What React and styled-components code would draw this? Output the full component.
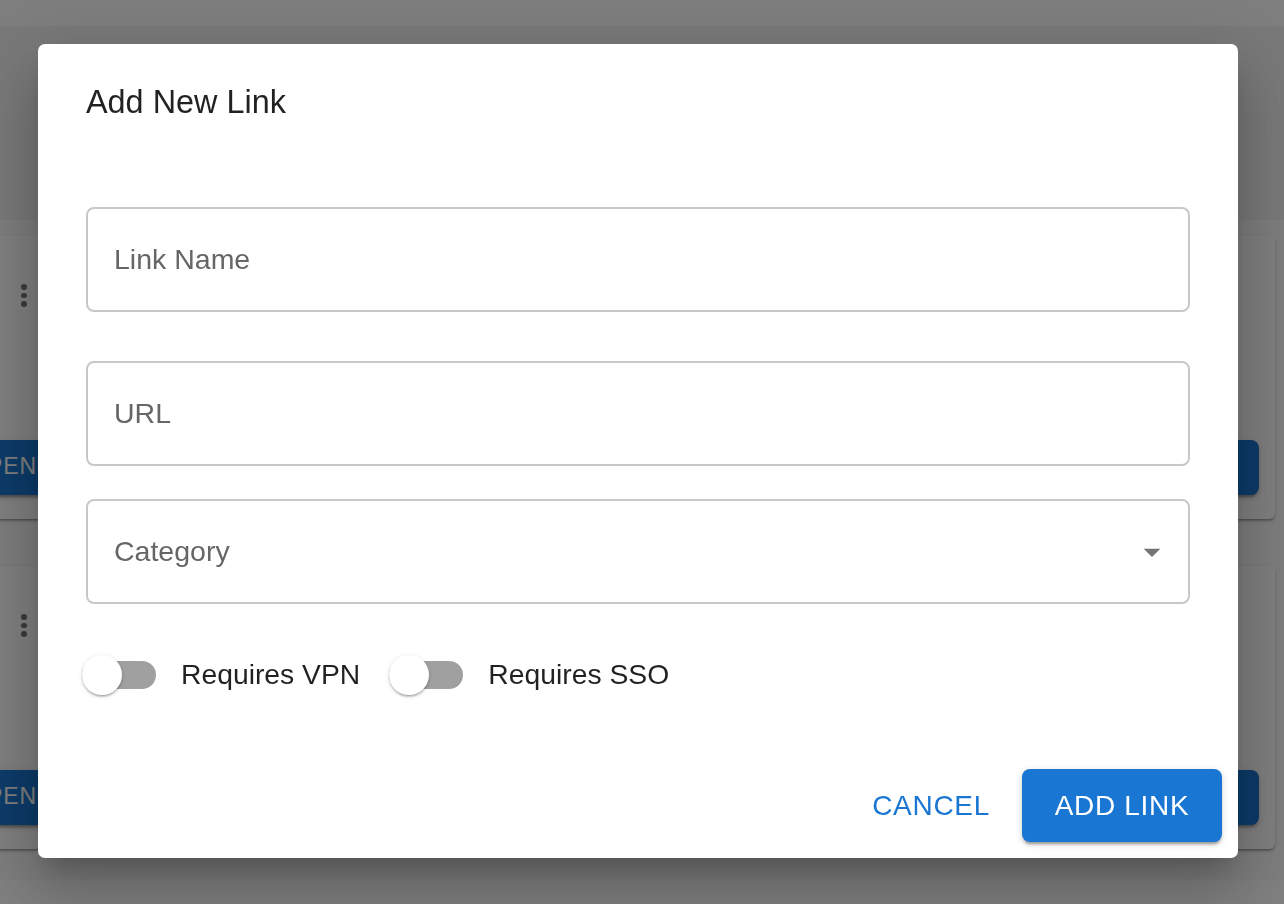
import React from 'react';
import styled, { createGlobalStyle } from 'styled-components';

const GlobalStyle = createGlobalStyle`
  html, body {
    margin: 0;
    height: 100%;
    overflow: hidden;
    background: #fbfbfb;
    font-family: "Liberation Sans", Arial, sans-serif;
  }
`;

const App = () => {
  return (
    <>
      <GlobalStyle />
      <Page>
        <TopBand />
        <HeaderBand />
        <CardArea>
          <LinkCard>
            <MoreDots>
              <i />
              <i />
              <i />
            </MoreDots>
            <CardActions>
              <OpenButton>OPEN</OpenButton>
            </CardActions>
          </LinkCard>
          <LinkCard>
            <MoreDots>
              <i />
              <i />
              <i />
            </MoreDots>
            <CardActions>
              <OpenButton>OPEN</OpenButton>
            </CardActions>
          </LinkCard>
        </CardArea>
        <BottomBand />
      </Page>
      <Backdrop />
      <DialogWrap>
        <Dialog>
          <DialogTitle>Add New Link</DialogTitle>
          <DialogBody>
            <OutlinedField>
              <Placeholder>Link Name</Placeholder>
            </OutlinedField>
            <OutlinedField>
              <Placeholder>URL</Placeholder>
            </OutlinedField>
            <OutlinedField $select>
              <Placeholder>Category</Placeholder>
              <svg width="40" height="40" viewBox="0 0 24 24" fill="#757575">
                <path d="M7 10l5 5 5-5z" />
              </svg>
            </OutlinedField>
            <SwitchRow>
              <SwitchLabel>
                <SwitchTrack>
                  <SwitchThumb />
                </SwitchTrack>
                Requires VPN
              </SwitchLabel>
              <SwitchLabel>
                <SwitchTrack>
                  <SwitchThumb />
                </SwitchTrack>
                Requires SSO
              </SwitchLabel>
            </SwitchRow>
          </DialogBody>
          <DialogActions>
            <TextButton>CANCEL</TextButton>
            <ContainedButton>ADD LINK</ContainedButton>
          </DialogActions>
        </Dialog>
      </DialogWrap>
    </>
  );
};

export default App;

const Page = styled.div`
  width: 1284px;
  height: 904px;
  display: flex;
  flex-direction: column;
  overflow: hidden;
`;

const TopBand = styled.div`
  flex: 0 0 26px;
  background: #fcfcfc;
`;

const HeaderBand = styled.div`
  flex: 0 0 194px;
  background: #f2f2f2;
`;

const CardArea = styled.div`
  flex: 0 0 660px;
  box-sizing: border-box;
  display: flex;
  flex-direction: column;
  gap: 47px;
  padding: 16px 9px 0 0;
  margin-left: -60px;
  background: #fbfbfb;
`;

const BottomBand = styled.div`
  flex: 1;
  background: #ffffff;
`;

const LinkCard = styled.div`
  flex: 0 0 283px;
  display: flex;
  flex-direction: column;
  justify-content: space-between;
  background: #fff;
  border-radius: 6px;
  box-shadow: 0 3px 2px -2px rgba(0, 0, 0, 0.2), 0 2px 2px rgba(0, 0, 0, 0.14),
    0 2px 5px rgba(0, 0, 0, 0.12);
`;

const MoreDots = styled.div`
  display: flex;
  flex-direction: column;
  gap: 3px;
  width: 6px;
  margin: 48px 0 0 81px;

  i {
    width: 6px;
    height: 5.6px;
    border-radius: 50%;
    background: #757575;
  }
`;

const CardActions = styled.div`
  display: flex;
  padding: 0 16px 24px 0;
`;

const OpenButton = styled.button`
  flex: 1;
  height: 55px;
  padding: 0 0 2px 28px;
  border: 0;
  border-radius: 8px;
  background: #1976d2;
  color: #fff;
  font: 23px "Liberation Sans", Arial, sans-serif;
  letter-spacing: 1px;
  text-align: left;
  box-shadow: 0 5px 2px -3px rgba(0, 0, 0, 0.2), 0 3px 3px rgba(0, 0, 0, 0.14),
    0 2px 8px rgba(0, 0, 0, 0.12);
`;

const Backdrop = styled.div`
  position: fixed;
  inset: 0;
  background: rgba(0, 0, 0, 0.5);
`;

const DialogWrap = styled.div`
  position: fixed;
  top: 0;
  left: 0;
  width: 1276px;
  height: 902px;
  display: flex;
  align-items: center;
  justify-content: center;
`;

const Dialog = styled.div`
  width: 1200px;
  height: 814px;
  display: flex;
  flex-direction: column;
  background: #fff;
  border-radius: 7px;
  color: rgba(0, 0, 0, 0.87);
  box-shadow: 0 16px 22px -10px rgba(0, 0, 0, 0.2),
    0 36px 57px 4px rgba(0, 0, 0, 0.14), 0 14px 69px 12px rgba(0, 0, 0, 0.12);
`;

const DialogTitle = styled.h2`
  margin: 0;
  padding: 34px 48px 24px;
  font-size: 32.4px;
  font-weight: 400;
  line-height: 48px;
`;

const DialogBody = styled.div`
  flex: 1;
  display: flex;
  flex-direction: column;
  padding: 57px 48px 0;
`;

const OutlinedField = styled.div`
  flex: 0 0 105px;
  box-sizing: border-box;
  display: flex;
  align-items: center;
  justify-content: space-between;
  padding: 0 16px 0 26px;
  margin-bottom: ${(p) => (p.$select ? '0' : '49px')};
  border: 2px solid #c8c8c8;
  border-radius: 8px;

  &:nth-child(2) {
    margin-bottom: 33px;
  }
`;

const Placeholder = styled.span`
  font-size: 28.5px;
  color: #666;
`;

const SwitchRow = styled.div`
  display: flex;
  gap: 29px;
  margin: 54px 0 0 -4px;
`;

const SwitchLabel = styled.label`
  display: flex;
  align-items: center;
  gap: 25px;
  font-size: 28.3px;
`;

const SwitchTrack = styled.span`
  position: relative;
  width: 74px;
  height: 28px;
  border-radius: 14px;
  background: #a0a0a0;
`;

const SwitchThumb = styled.span`
  position: absolute;
  top: -6px;
  left: 0;
  width: 40px;
  height: 40px;
  border-radius: 50%;
  background: #fff;
  box-shadow: 0 3px 2px -2px rgba(0, 0, 0, 0.2), 0 2px 2px rgba(0, 0, 0, 0.14),
    0 1px 5px rgba(0, 0, 0, 0.12);
`;

const DialogActions = styled.div`
  display: flex;
  justify-content: flex-end;
  align-items: center;
  gap: 32px;
  padding: 0 16px 16px 0;
`;

const TextButton = styled.button`
  border: 0;
  padding: 0;
  background: none;
  color: #1976d2;
  font: 28px "Liberation Sans", Arial, sans-serif;
  letter-spacing: 0.7px;
`;

const ContainedButton = styled.button`
  width: 200px;
  height: 73px;
  border: 0;
  border-radius: 8px;
  background: #1976d2;
  color: #fff;
  font: 28px "Liberation Sans", Arial, sans-serif;
  letter-spacing: 0.7px;
  box-shadow: 0 4px 2px -2px rgba(0, 0, 0, 0.2), 0 3px 3px rgba(0, 0, 0, 0.14),
    0 2px 8px rgba(0, 0, 0, 0.12);
`;
